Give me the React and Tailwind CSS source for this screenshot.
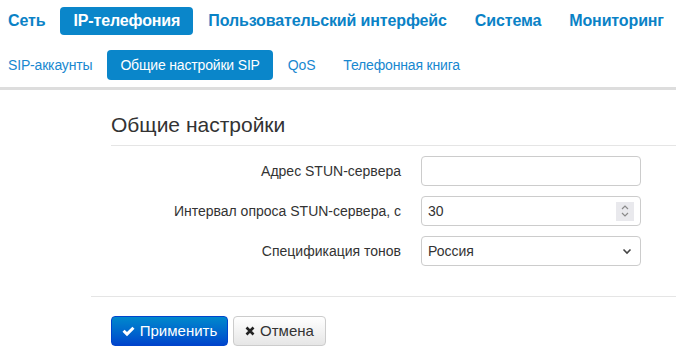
import React from "react";

const topItems = ["Сеть", "IP-телефония", "Пользовательский интерфейс", "Система", "Мониторинг"];
const subItems = ["SIP-аккаунты", "Общие настройки SIP", "QoS", "Телефонная книга"];

const App = () => {

  return (

    <div className="w-[676px] h-[353px] bg-white overflow-hidden font-['Liberation_Sans',Arial,sans-serif] text-[#333]">

      {/* Top menu */}

      <div className="flex gap-[2px] ml-[-5px] pt-[7px] whitespace-nowrap tracking-[-0.13px]">
        {topItems.map(item => (
          <div
            key={item}
            className={`shrink-0 h-[28px] px-[13px] flex items-center rounded-[4px] text-[16px] font-bold ${
              item === "IP-телефония" ? "bg-[#0a86ca] text-white" : "text-[#0a82c6]"
            }`}
          >
            {item}
          </div>
        ))}
      </div>

      {/* Sub menu */}

      <div className="flex gap-[2px] ml-[-5px] mt-[15px] whitespace-nowrap tracking-[-0.17px]">
        {subItems.map(item => (
          <div
            key={item}
            className={`shrink-0 h-[30px] px-[13px] flex items-center rounded-[4px] text-[14px] ${
              item === "Общие настройки SIP" ? "bg-[#0a86ca] text-white" : "text-[#1888d0]"
            }`}
          >
            {item}
          </div>
        ))}
      </div>

      <div className="h-[3px] bg-[#dddddd] mt-[7px]" />

      {/* Form */}

      <div className="ml-[91px] mt-[15px]">

        <div className="ml-[20px] h-[41px] leading-[40px] text-[21px] border-b border-[#e5e5e5]">
          Общие настройки
        </div>

        <div className="ml-[20px] mt-[10px] flex flex-col gap-[10px] whitespace-nowrap">

          <div className="flex items-center gap-[20px]">
            <div className="w-[290px] text-right text-[14px]">Адрес STUN-сервера</div>
            <div className="w-[220px] h-[30px] border border-[#cccccc] rounded-[4px]" />
          </div>

          <div className="flex items-center gap-[20px]">
            <div className="w-[290px] text-right text-[14px]">Интервал опроса STUN-сервера, с</div>
            <div className="w-[220px] h-[30px] border border-[#cccccc] rounded-[4px] flex items-center justify-between pl-[6px] pr-[6px] text-[14px]">
              <span>30</span>
              <div className="w-[18px] h-[19px] bg-[#e9e9ed] flex items-center justify-center">
                <svg width="10" height="14" viewBox="0 0 10 14" fill="none" stroke="#8a8a8a" strokeWidth="1.2">
                  <path d="M2 5 L5 2 L8 5" />
                  <path d="M2 9 L5 12 L8 9" />
                </svg>
              </div>
            </div>
          </div>

          <div className="flex items-center gap-[20px]">
            <div className="w-[290px] text-right text-[14px]">Спецификация тонов</div>
            <div className="w-[220px] h-[30px] border border-[#cccccc] rounded-[4px] flex items-center justify-between pl-[6px] pr-[8px] text-[14px]">
              <span>Россия</span>
              <svg width="10" height="7" viewBox="0 0 10 7" fill="none" stroke="#444" strokeWidth="1.6">
                <path d="M1.5 1.5 L5 5 L8.5 1.5" />
              </svg>
            </div>
          </div>

        </div>

        <div className="h-px bg-[#e5e5e5] mt-[30px]" />

        <div className="ml-[20px] mt-[19px] flex gap-[5px]">

          <button className="h-[30px] w-[117px] flex items-center justify-center gap-[5px] rounded-[4px] border border-[#0044cc] bg-gradient-to-b from-[#0088cc] to-[#0044cc] text-white text-[15px]">
            <svg width="13" height="11" viewBox="0 0 13 11" fill="white">
              <path d="M0.5 5.8 L2.6 3.7 L5 6.1 L10.4 0.7 L12.5 2.8 L5 10.3 Z" />
            </svg>
            Применить
          </button>

          <button className="h-[30px] w-[93px] flex items-center justify-center gap-[5px] rounded-[4px] border border-[#cccccc] bg-gradient-to-b from-white to-[#e6e6e6] text-[#333] text-[15px]">
            <svg width="10" height="10" viewBox="0 0 10 10" fill="none" stroke="#222" strokeWidth="2.6">
              <path d="M1.5 1.5 L8.5 8.5 M8.5 1.5 L1.5 8.5" />
            </svg>
            Отмена
          </button>

        </div>

      </div>

    </div>

  );

};

export default App;
